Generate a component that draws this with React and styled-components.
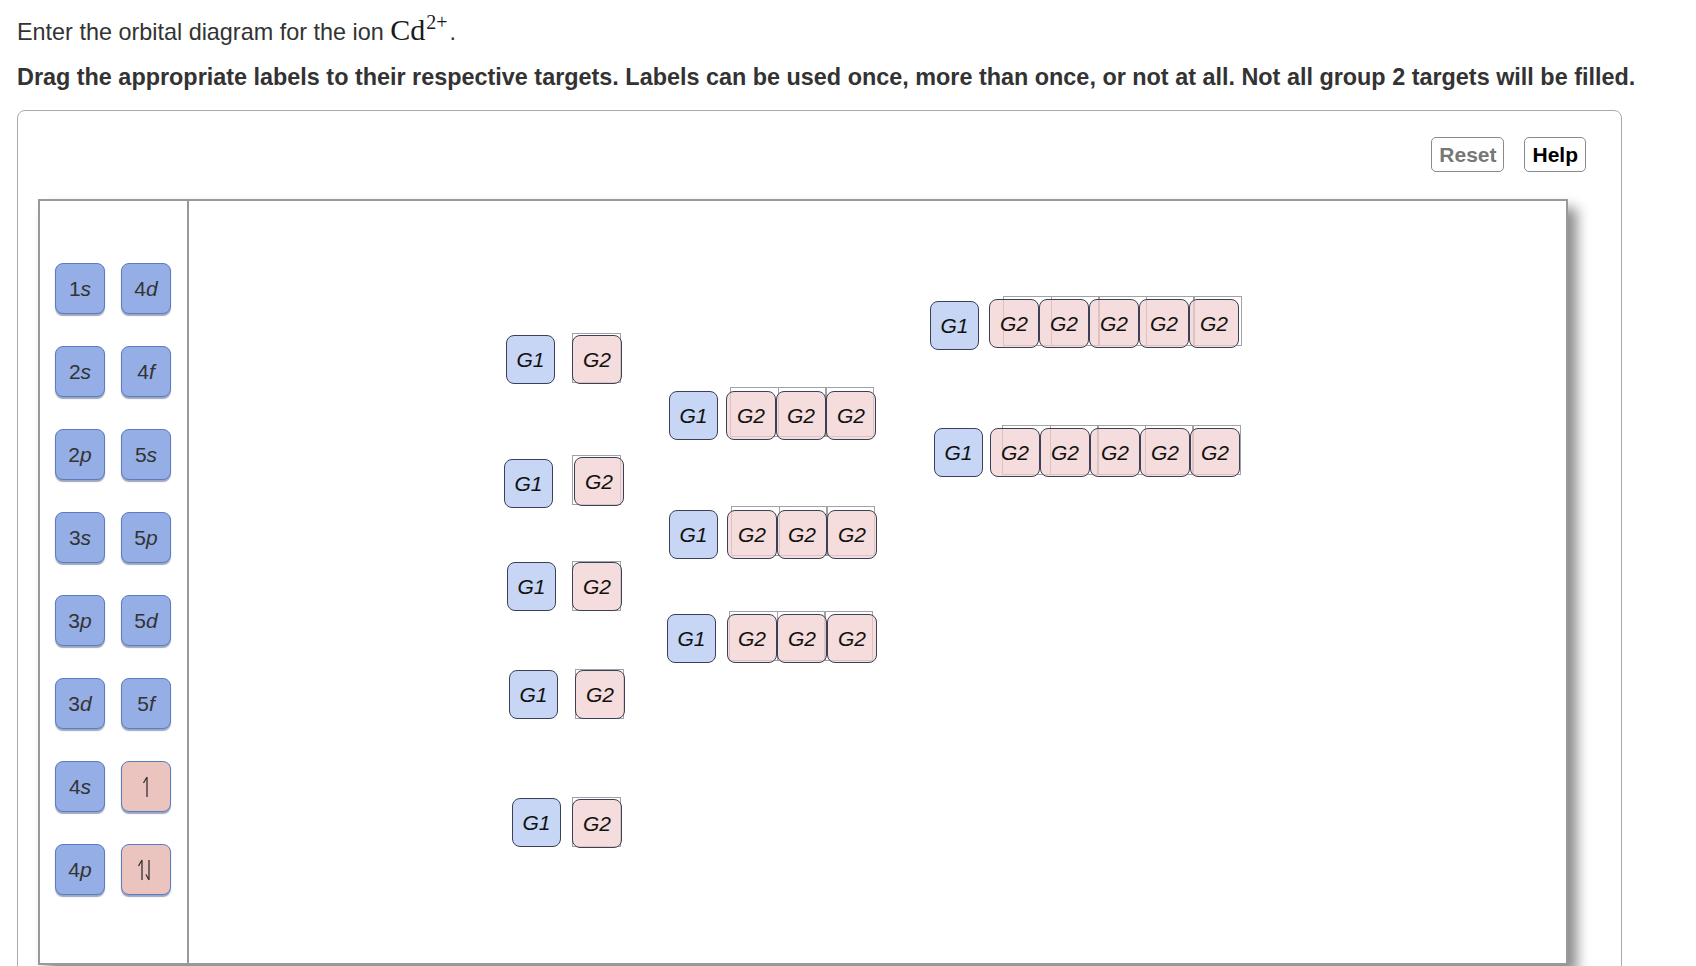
import React from 'react';
import styled, { createGlobalStyle } from 'styled-components';

const GlobalStyle = createGlobalStyle`
  html, body {
    margin: 0;
    padding: 0;
    overflow: hidden;
    background: #fff;
  }
  body {
    font-family: 'Liberation Sans', Arial, sans-serif;
    color: #333;
  }
`;

const palette = [
  ['1', 's'],
  ['4', 'd'],
  ['2', 's'],
  ['4', 'f'],
  ['2', 'p'],
  ['5', 's'],
  ['3', 's'],
  ['5', 'p'],
  ['3', 'p'],
  ['5', 'd'],
  ['3', 'd'],
  ['5', 'f'],
  ['4', 's'],
  'up',
  ['4', 'p'],
  'pair',
];

// energy levels drawn on the canvas: G1 position, gap to the G2 strip,
// number of G2 boxes and how far the drop targets sit from the labels
const levels = [
  { x: 317, y: 134, gap: 17, n: 1, tx: 0, ty: -2 },
  { x: 315, y: 258, gap: 21, n: 1, tx: -2, ty: -2, g2y: -2 },
  { x: 318, y: 361, gap: 16, n: 1, tx: 0, ty: -1 },
  { x: 320, y: 469, gap: 17, n: 1, tx: 0, ty: -1 },
  { x: 323, y: 597, gap: 11, n: 1, tx: 0, ty: -2, g2y: 1 },
  { x: 480, y: 190, gap: 8, n: 3, tx: 4, ty: -4 },
  { x: 480, y: 309, gap: 9, n: 3, tx: 4, ty: -4 },
  { x: 478, y: 413, gap: 11, n: 3, tx: 2, ty: -3 },
  { x: 741, y: 100, gap: 10, n: 5, tx: 14, ty: -3, g2y: -2 },
  { x: 745, y: 227, gap: 7, n: 5, tx: 12, ty: -3 },
];

const Harpoon = ({ pair }) =>
  pair ? (
    <svg width="22" height="26" viewBox="0 0 22 26" fill="none">
      <path d="M7 3V23M7 3L3.5 9" stroke="#333" strokeWidth="1.3" />
      <path d="M14 3V23M14 23L11 17.5" stroke="#333" strokeWidth="1.3" />
    </svg>
  ) : (
    <svg width="14" height="26" viewBox="0 0 14 26" fill="none">
      <path d="M8 3V23M8 3L4.5 9" stroke="#333" strokeWidth="1.3" />
    </svg>
  );

const App = () => {
  return (
    <Page>
      <GlobalStyle />
      <Prompt>
        Enter the orbital diagram for the ion{' '}
        <Formula>
          Cd<sup>2+</sup>
        </Formula>
        .
      </Prompt>
      <Instructions>
        Drag the appropriate labels to their respective targets. Labels can be
        used once, more than once, or not at all. Not all group 2 targets will
        be filled.
      </Instructions>
      <Panel>
        <Toolbar>
          <ToolButton $muted>Reset</ToolButton>
          <ToolButton>Help</ToolButton>
        </Toolbar>
        <Board>
          <LabelBank>
            {palette.map((item, i) =>
              typeof item === 'string' ? (
                <BankTile key={i} $spin>
                  <Harpoon pair={item === 'pair'} />
                </BankTile>
              ) : (
                <BankTile key={i}>
                  {item[0]}
                  <em>{item[1]}</em>
                </BankTile>
              )
            )}
          </LabelBank>
          <Canvas>
            {levels.map((lv, i) => (
              <Level key={i} $x={lv.x} $y={lv.y} $gap={lv.gap}>
                <Tag $kind="g1">G1</Tag>
                <Strip $dy={lv.g2y || 0}>
                  <Targets $tx={lv.tx} $ty={lv.ty}>
                    {Array.from({ length: lv.n }).map((_, j) => (
                      <TargetBox key={j} />
                    ))}
                  </Targets>
                  {Array.from({ length: lv.n }).map((_, j) => (
                    <Tag key={j} $kind="g2">
                      G2
                    </Tag>
                  ))}
                </Strip>
              </Level>
            ))}
          </Canvas>
        </Board>
      </Panel>
    </Page>
  );
};

const Page = styled.div`
  padding: 14px 0 0 17px;
`;

const Prompt = styled.div`
  font-size: 23.4px;
  line-height: 32px;
  color: #333;
`;

const Formula = styled.span`
  font-family: 'Liberation Serif', 'DejaVu Serif', serif;
  font-size: 30px;
  color: #1a1a1a;
  sup {
    font-size: 20px;
    vertical-align: 0;
    position: relative;
    top: -11px;
    margin-left: 1px;
    margin-right: 2px;
  }
`;

const Instructions = styled.div`
  margin-top: 12px;
  font-size: 23.4px;
  font-weight: 700;
  line-height: 32px;
  color: #333;
  white-space: nowrap;
`;

const Panel = styled.div`
  margin-top: 17px;
  width: 1605px;
  box-sizing: border-box;
  height: 900px;
  border: 1px solid #aaa;
  border-radius: 8px;
  padding: 0 0 0 20px;
`;

const Toolbar = styled.div`
  display: flex;
  justify-content: flex-end;
  gap: 20px;
  padding: 26px 35px 0 0;
  height: 35px;
`;

const ToolButton = styled.div`
  box-sizing: border-box;
  height: 35px;
  padding: 0 7px;
  display: flex;
  align-items: center;
  border: 1px solid #8a8a8a;
  border-radius: 5px;
  font-size: 21px;
  font-weight: 700;
  color: ${(p) => (p.$muted ? '#777' : '#000')};
  background: #fff;
`;

const Board = styled.div`
  margin-top: 27px;
  width: 1530px;
  height: 766px;
  box-sizing: border-box;
  border: 2px solid #999;
  display: grid;
  grid-template-columns: 149px 1fr;
  background: #fff;
  box-shadow: 9px 9px 12px rgba(0, 0, 0, 0.45);
`;

const LabelBank = styled.div`
  border-right: 2px solid #999;
  display: grid;
  grid-template-columns: repeat(2, 50px);
  grid-auto-rows: 51px;
  column-gap: 16px;
  row-gap: 32px;
  padding: 62px 0 0 15px;
  align-content: start;
`;

const BankTile = styled.div`
  box-sizing: border-box;
  display: flex;
  align-items: center;
  justify-content: center;
  border: 1px solid #5b7cc2;
  border-radius: 8px;
  background: ${(p) => (p.$spin ? '#ebc3bf' : '#95aee6')};
  box-shadow: 0 1.5px 1px rgba(40, 60, 110, 0.45);
  font-size: 21px;
  color: #333;
  em {
    font-style: italic;
  }
`;

const Canvas = styled.div`
  position: relative;
`;

const Level = styled.div`
  position: absolute;
  left: ${(p) => p.$x}px;
  top: ${(p) => p.$y}px;
  display: flex;
  align-items: flex-start;
  gap: ${(p) => p.$gap}px;
`;

const Strip = styled.div`
  position: relative;
  display: flex;
  margin-top: ${(p) => p.$dy}px;
`;

const Targets = styled.div`
  position: absolute;
  left: ${(p) => p.$tx}px;
  top: ${(p) => p.$ty}px;
  display: flex;
`;

const TargetBox = styled.div`
  width: 47px;
  height: 48px;
  border: 1.5px solid #a2a2a2;
  margin-right: -1.5px;
`;

const Tag = styled.div`
  position: relative;
  box-sizing: border-box;
  width: ${(p) => (p.$kind === 'g1' ? 49 : 50)}px;
  height: 49px;
  display: flex;
  align-items: center;
  justify-content: center;
  border: 1.5px solid #3b4057;
  border-radius: 8px;
  background: ${(p) =>
    p.$kind === 'g1' ? 'rgba(196, 212, 243, 0.95)' : 'rgba(240, 208, 206, 0.72)'};
  font-size: 21px;
  font-style: italic;
  color: #111;
`;

export default App;
